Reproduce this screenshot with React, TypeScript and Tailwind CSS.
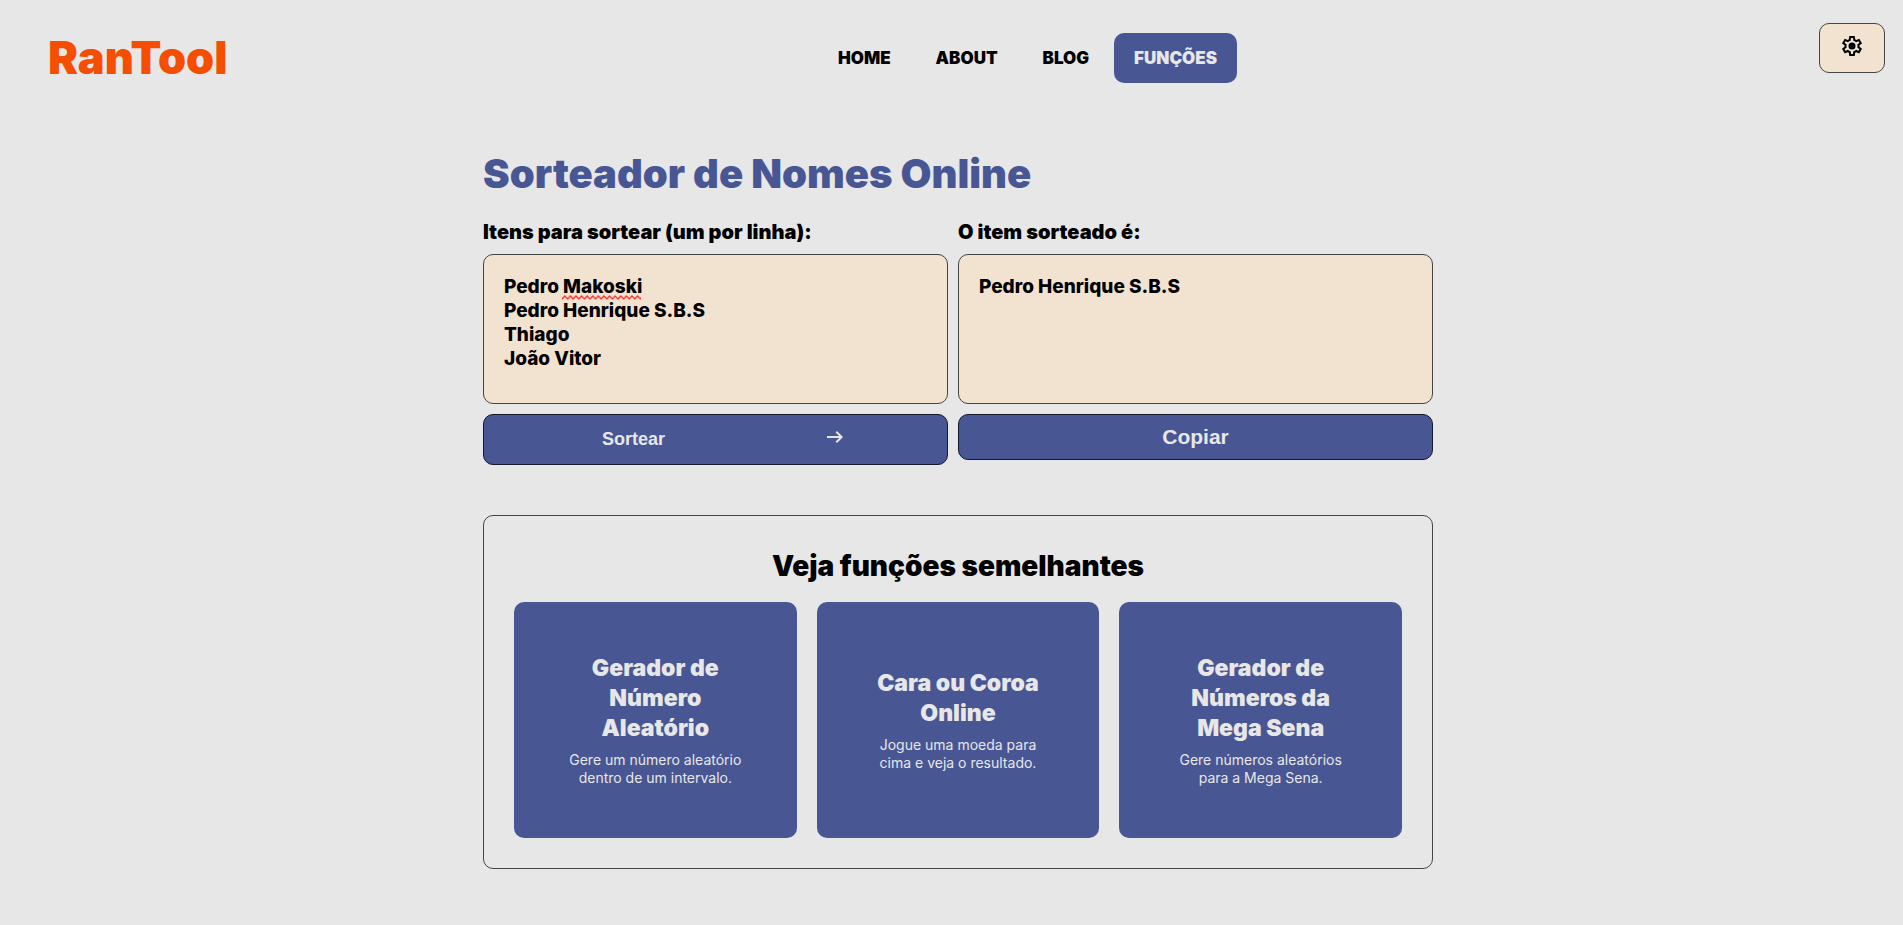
import { useState } from "react";

interface Tool {
  title: string;
  description: string;
}

const navLinks = ["Home", "About", "Blog"];

const similarTools: Tool[] = [
  { title: "Gerador de Número Aleatório", description: "Gere um número aleatório dentro de um intervalo." },
  { title: "Cara ou Coroa Online", description: "Jogue uma moeda para cima e veja o resultado." },
  { title: "Gerador de Números da Mega Sena", description: "Gere números aleatórios para a Mega Sena." },
];

function SettingsIcon() {
  return (
    <svg viewBox="0 0 24 24" className="h-6 w-6" aria-hidden="true">
      <path
        fillRule="evenodd"
        d="m9.25 22-.4-3.2q-.325-.125-.612-.3-.288-.175-.563-.375L4.7 19.375l-2.75-4.75 2.575-1.95Q4.5 12.5 4.5 12.337v-.675q0-.162.025-.337L1.95 9.375l2.75-4.75 2.975 1.25q.275-.2.575-.375.3-.175.6-.3l.4-3.2h5.5l.4 3.2q.325.125.613.3.287.175.562.375l2.975-1.25 2.75 4.75-2.575 1.95q.025.175.025.337v.675q0 .163-.05.338l2.575 1.95-2.75 4.75-2.95-1.25q-.275.2-.575.375-.3.175-.6.3l-.4 3.2ZM11 20h1.975l.35-2.65q.775-.2 1.438-.587.662-.388 1.212-.938l2.475 1.025.975-1.7-2.15-1.625q.125-.35.175-.738.05-.387.05-.787t-.05-.788q-.05-.387-.175-.737l2.15-1.625-.975-1.7-2.475 1.05q-.55-.575-1.212-.963-.663-.387-1.438-.587L13 4h-1.975l-.35 2.65q-.775.2-1.437.587-.663.388-1.213.938L5.55 7.15l-.975 1.7 2.15 1.6q-.125.375-.175.75-.05.375-.05.8 0 .4.05.775.05.375.175.75l-2.15 1.625.975 1.7 2.475-1.05q.55.575 1.213.962.662.388 1.437.588Z"
      />
      <circle cx="12" cy="12" r="3.5" />
    </svg>
  );
}

function ArrowIcon() {
  return (
    <svg viewBox="0 0 24 24" className="mb-1.5 h-6 w-6" fill="currentColor" aria-hidden="true">
      <path d="m14 18-1.4-1.45L16.15 13H4v-2h12.15L12.6 7.45 14 6l6 6Z" />
    </svg>
  );
}

function Header() {
  return (
    <header className="flex items-start pt-[33px] pl-12">
      <a href="#" className="w-[770px] text-[45px] leading-[50px] font-black text-[#f64e00]">
        RanTool
      </a>
      <nav className="flex gap-[5px] text-[17px] leading-[50px] font-black uppercase">
        {navLinks.map((label) => (
          <a key={label} href="#" className="px-5">
            {label}
          </a>
        ))}
        <a href="#" className="rounded-[10px] bg-[#485694] px-5 text-[#e7e7e7]">
          Funções
        </a>
      </nav>
      <button
        type="button"
        aria-label="Configurações"
        className="fixed top-[23px] right-[18px] flex h-[50px] w-[66px] items-center justify-center rounded-[10px] border border-[#444] bg-[#f2e3d0] pb-1"
      >
        <SettingsIcon />
      </button>
    </header>
  );
}

function ToolCard({ title, description }: Tool) {
  return (
    <a
      href="#"
      className="flex h-[236px] flex-col items-center justify-center gap-2 rounded-[10px] bg-[#485694] px-[50px] text-center text-[#e7e7e7]"
    >
      <h3 className="text-[23px] leading-[30px] font-black">{title}</h3>
      <p className="text-[14px] leading-[18px]">{description}</p>
    </a>
  );
}

export default function App() {
  const [items, setItems] = useState("Pedro Makoski\nPedro Henrique S.B.S\nThiago\nJoão Vitor");
  const [result, setResult] = useState("Pedro Henrique S.B.S");

  const handleDraw = () => {
    const names = items.split("\n").filter((name) => name.trim());
    if (names.length === 0) return;
    setResult(names[Math.floor(Math.random() * names.length)]);
  };

  return (
    <div className="min-h-screen bg-[#e7e7e7] font-['Inter',sans-serif] text-black">
      <Header />

      <main className="pt-[66px] pl-[13px]">
        <div className="mx-auto max-w-[950px]">
          <h1 className="text-[40px] leading-[50px] font-black text-[#485694]">Sorteador de Nomes Online</h1>

          <div className="mt-5 grid grid-cols-2 items-start">
            <div className="mr-[10px] flex flex-col">
              <label htmlFor="items" className="mb-2 text-[20px] leading-[27px] font-black">
                Itens para sortear (um por linha):
              </label>
              <div className="relative">
                <textarea
                  id="items"
                  value={items}
                  onChange={(e) => setItems(e.target.value)}
                  spellCheck={false}
                  className="block h-[150px] w-full resize-none rounded-[10px] border border-[#444] bg-[#f2e3d0] p-5 text-[19px] leading-6 font-extrabold outline-none"
                />
                {/* Spelling mark under the surname */}
                <svg className="pointer-events-none absolute top-[41px] left-[79px] h-[5px] w-[79px]" aria-hidden="true">
                  <defs>
                    <pattern id="wave" width="5.6" height="5" patternUnits="userSpaceOnUse">
                      <path d="M-1 4.9 L0 4 L2.8 1 L5.6 4 L6.6 4.9" fill="none" stroke="#ff2a2a" strokeWidth="1.2" />
                    </pattern>
                  </defs>
                  <rect width="100%" height="100%" fill="url(#wave)" />
                </svg>
              </div>
              <button
                type="button"
                onClick={handleDraw}
                className="mt-[10px] flex h-[51px] items-center justify-center gap-[158px] rounded-[10px] border border-[#15192c] bg-[#485694] pl-[18px] font-['Liberation_Sans',sans-serif] text-[18px] font-bold text-[#e7e7e7]"
              >
                Sortear
                <ArrowIcon />
              </button>
            </div>

            <div className="flex flex-col">
              <label htmlFor="result" className="mb-2 text-[20px] leading-[27px] font-black">
                O item sorteado é:
              </label>
              <textarea
                id="result"
                value={result}
                readOnly
                className="block h-[150px] w-full resize-none rounded-[10px] border border-[#444] bg-[#f2e3d0] p-5 text-[19px] leading-6 font-extrabold outline-none"
              />
              <button
                type="button"
                onClick={() => navigator.clipboard?.writeText(result)}
                className="mt-[10px] h-[46px] rounded-[10px] border border-[#15192c] bg-[#485694] font-['Liberation_Sans',sans-serif] text-[21px] font-bold text-[#e7e7e7]"
              >
                Copiar
              </button>
            </div>
          </div>

          <section className="mt-[50px] rounded-[10px] border border-[#444] p-[30px]">
            <h2 className="mb-4 text-center text-[28px] leading-10 font-black">Veja funções semelhantes</h2>
            <div className="grid grid-cols-3 gap-5">
              {similarTools.map((tool) => (
                <ToolCard key={tool.title} {...tool} />
              ))}
            </div>
          </section>
        </div>
      </main>
    </div>
  );
}
